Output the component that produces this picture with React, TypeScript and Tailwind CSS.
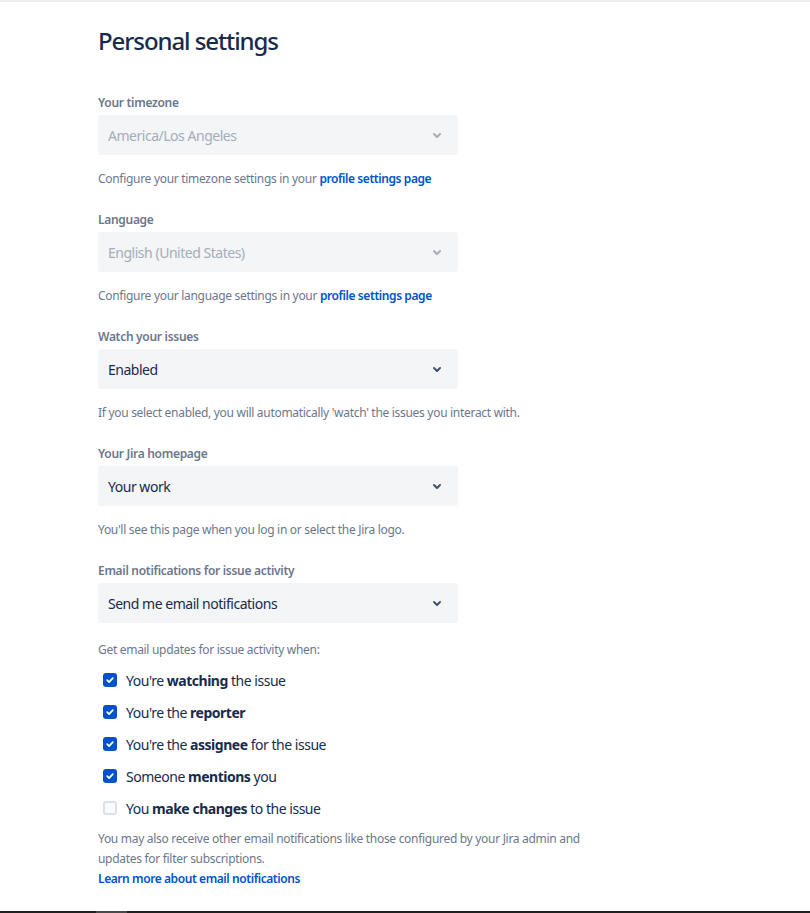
import React from 'react';

const font = "font-['Segoe_UI','Noto_Sans','Liberation_Sans',sans-serif] tracking-[-0.03em]";
const small = 'text-[12px] tracking-[-0.025em]';

const Chevron = ({ disabled }: { disabled?: boolean }) => (
  <svg width="24" height="24" viewBox="0 0 24 24" className={disabled ? 'text-[#a5adba]' : 'text-[#42526e]'}>
    <path
      d="M8.292 10.293a1.009 1.009 0 000 1.419l2.939 2.965c.218.215.5.322.779.322s.556-.107.769-.322l2.93-2.955a1.01 1.01 0 000-1.419.987.987 0 00-1.406 0l-2.298 2.317-2.307-2.327a.99.99 0 00-1.406 0z"
      fill="currentColor"
    />
  </svg>
);

type FieldProps = {
  label: string;
  value: string;
  disabled?: boolean;
  help: React.ReactNode;
};

const Field = ({ label, value, disabled, help }: FieldProps) => (
  <div className="mb-[25px]">
    <div className={`${small} leading-4 font-semibold text-[#6b778c]`}>{label}</div>
    <div className="mt-1 w-[360px] h-10 rounded-[3px] bg-[#f4f5f7] flex items-center justify-between pl-[10px] pr-[9px]">
      <span className={`text-[14px] ${disabled ? 'text-[#a5adba]' : 'text-[#172b4d]'}`}>{value}</span>
      <Chevron disabled={disabled} />
    </div>
    <div className={`mt-4 ${small} leading-4 text-[#6b778c]`}>{help}</div>
  </div>
);

const Link = ({ children }: { children: React.ReactNode }) => (
  <a className="text-[#0052cc] font-semibold tracking-[-0.035em] cursor-pointer">{children}</a>
);

const options = [
  { checked: true, parts: ["You're ", 'watching', ' the issue'] },
  { checked: true, parts: ["You're the ", 'reporter', ''] },
  { checked: true, parts: ["You're the ", 'assignee', ' for the issue'] },
  { checked: true, parts: ['Someone ', 'mentions', ' you'] },
  { checked: false, parts: ['You ', 'make changes', ' to the issue'] },
];

const Checkbox = ({ checked }: { checked: boolean }) =>
  checked ? (
    <span className="w-[14px] h-[14px] rounded-[3px] bg-[#0052cc] flex items-center justify-center">
      <svg width="10" height="10" viewBox="0 0 10 10">
        <path d="M2.2 5.2l1.9 1.9 3.7-3.9" stroke="white" strokeWidth="1.8" fill="none" strokeLinecap="round" strokeLinejoin="round" />
      </svg>
    </span>
  ) : (
    <span className="w-[14px] h-[14px] rounded-[3px] bg-[#fafbfc] border-2 border-[#dfe1e6]" />
  );

export default function App() {
  return (
    <div className={`${font} h-[913px] bg-white flex flex-col overflow-hidden`}>
      <div className="h-[2px] bg-[#ebecf0]" />
      <main className="flex-1 pl-[98px] pt-[25px]">
        <h1 className="text-[24px] leading-7 font-medium text-[#172b4d] tracking-[-0.045em]">Personal settings</h1>

        <div className="mt-[40px]">
          <Field
            label="Your timezone"
            value="America/Los Angeles"
            disabled
            help={<>Configure your timezone settings in your <Link>profile settings page</Link></>}
          />
          <Field
            label="Language"
            value="English (United States)"
            disabled
            help={<>Configure your language settings in your <Link>profile settings page</Link></>}
          />
          <Field
            label="Watch your issues"
            value="Enabled"
            help="If you select enabled, you will automatically 'watch' the issues you interact with."
          />
          <Field
            label="Your Jira homepage"
            value="Your work"
            help="You'll see this page when you log in or select the Jira logo."
          />
          <div>
            <div className={`${small} leading-4 font-semibold text-[#6b778c]`}>Email notifications for issue activity</div>
            <div className="mt-1 w-[360px] h-10 rounded-[3px] bg-[#f4f5f7] flex items-center justify-between pl-[10px] pr-[9px]">
              <span className="text-[14px] text-[#172b4d]">Send me email notifications</span>
              <Chevron />
            </div>
          </div>

          <div className={`mt-[19px] ${small} leading-4 text-[#6b778c]`}>Get email updates for issue activity when:</div>

          <div className="mt-[6px]">
            {options.map((o, i) => (
              <div key={i} className="h-8 flex items-center pl-[5px]">
                <Checkbox checked={o.checked} />
                <span className="ml-[9px] text-[14px] text-[#172b4d]">
                  {o.parts[0]}
                  <b className="font-bold">{o.parts[1]}</b>
                  {o.parts[2]}
                </span>
              </div>
            ))}
          </div>

          <div className={`mt-[5px] w-[490px] ${small} leading-5 text-[#6b778c]`}>
            You may also receive other email notifications like those configured by your Jira admin and updates for filter subscriptions.
            <div>
              <Link>Learn more about email notifications</Link>
            </div>
          </div>
        </div>
      </main>
      <div className="h-[2px] bg-[#202020] flex">
        <div className="ml-[96px] w-[31px] bg-[#4a4a4a]" />
      </div>
    </div>
  );
}
